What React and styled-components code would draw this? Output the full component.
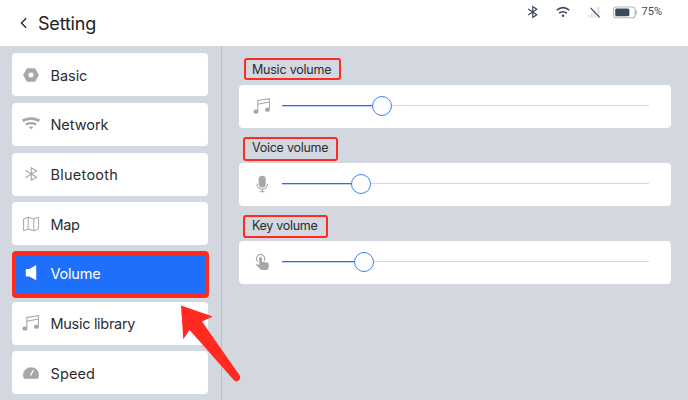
import React, { useState } from "react";
import styled, { createGlobalStyle } from "styled-components";

const theme = {
  background: "#d3d7e0",
  white: "#ffffff",
  text: "#2c2d30",
  icon: "#a7a7a7",
  status: "#3d4860",
  blue: "#1e70fa",
  red: "#ff2b20",
};

const menuItems = [
  { id: "basic", label: "Basic", icon: BasicIcon, spacing: -0.05 },
  { id: "network", label: "Network", icon: NetworkIcon, spacing: -0.05 },
  { id: "bluetooth", label: "Bluetooth", icon: BluetoothIcon, spacing: 0.25 },
  { id: "map", label: "Map", icon: MapIcon, spacing: -0.35 },
  { id: "volume", label: "Volume", icon: VolumeIcon, spacing: -0.2 },
  { id: "music", label: "Music library", icon: MusicIcon, spacing: -0.3 },
  { id: "speed", label: "Speed", icon: SpeedIcon, spacing: 0.1 },
];

const sliders = [
  { id: "music", label: "Music volume", icon: MusicIcon, value: 100, spacing: -0.22, frame: { x: 5, y: 0, w: 97, h: 22.5 } },
  { id: "voice", label: "Voice volume", icon: MicIcon, value: 79, spacing: -0.26, frame: { x: 4, y: 1, w: 95, h: 24 } },
  { id: "key", label: "Key volume", icon: TouchIcon, value: 82, spacing: -0.3, frame: { x: 4, y: 1, w: 85, h: 23 } },
];

export default function App() {
  const [selected, setSelected] = useState("volume");

  return (
    <Screen>
      <GlobalStyle />
      <Header>
        <BackIcon />
        <Title>Setting</Title>
        <StatusBar />
      </Header>
      <Body>
        <Sidebar>
          {menuItems.map(({ id, label, icon: Icon, spacing }) => (
            <MenuItem key={id} $active={id === selected} onClick={() => setSelected(id)}>
              <IconSlot>
                <Icon />
              </IconSlot>
              <MenuText $spacing={spacing}>{label}</MenuText>
            </MenuItem>
          ))}
        </Sidebar>
        <Content>
          {sliders.map(({ id, label, icon: Icon, value, spacing, frame }) => (
            <Section key={id}>
              <Label $spacing={spacing} $frame={frame}>
                <span>{label}</span>
              </Label>
              <SliderCard>
                <SliderIcon>
                  <Icon />
                </SliderIcon>
                <Track>
                  <Fill style={{ width: value }} />
                  <Knob />
                </Track>
              </SliderCard>
            </Section>
          ))}
        </Content>
      </Body>
      <Arrow viewBox="0 0 64 82">
        <path
          d="M3 4.5 L34.8 15.6 L24 20.4 L61.6 74.2 Q63 77.2 60.8 79.6 Q58.2 81.4 56 79.2 L11.6 29 L5.3 38.2 Z"
          fill={theme.red}
        />
      </Arrow>
    </Screen>
  );
}

function StatusBar() {
  return (
    <Status>
      <svg width="12" height="14" viewBox="0 0 12 14" fill="none" stroke={theme.status} strokeWidth="1.2">
        <path d="M1.2 4 L9.8 9.7 L5.8 12.3 V1.6 L9.8 4.2 L1.2 9.9" />
      </svg>
      <svg width="14" height="12" viewBox="0 0 14 12" fill="none" stroke={theme.status} strokeWidth="1.7">
        <path d="M0.8 4.2 Q7 -0.9 13.2 4.2 M3.2 7.2 Q7 4.3 10.8 7.2" />
        <circle cx="7" cy="9.8" r="1.2" fill={theme.status} stroke="none" />
      </svg>
      <svg width="14" height="14" viewBox="0 0 14 14">
        <path d="M1 10h1.6v2.5H1z M4 8h1.6v4.5H4z M7 5.5h1.6v7H7z M10.4 2h2v10.5h-2z" fill="#d9dde6" />
        <path d="M3.6 2.8 L12.6 12.4" stroke={theme.status} strokeWidth="1.2" />
      </svg>
      <Battery viewBox="0 0 24 13">
        <rect x="0.6" y="1" width="21.5" height="10.8" rx="2.8" fill="#fff" stroke="#b9b9b9" strokeWidth="1.1" />
        <path d="M23.2 4.6 V8.4" stroke="#b0b0b0" strokeWidth="1.2" />
        <rect x="2.2" y="2.5" width="14.2" height="7.8" rx="1.5" fill={theme.status} />
      </Battery>
      <Percent>75%</Percent>
    </Status>
  );
}

function BackIcon() {
  return (
    <svg width="8" height="12" viewBox="0 0 8 12" fill="none" stroke="#222" strokeWidth="1.3">
      <path d="M6.1 1.2 L1.4 6 L6.1 10.8" />
    </svg>
  );
}

function BasicIcon() {
  return (
    <svg width="18" height="18" viewBox="0 0 18 18">
      <path
        d="M5 2.4 H13 L16.6 9 L13 15.6 H5 L1.4 9 Z M9 6.2 A2.8 2.8 0 1 0 9 11.8 A2.8 2.8 0 1 0 9 6.2 Z"
        fill={theme.icon}
        fillRule="evenodd"
        stroke={theme.icon}
        strokeWidth="0.5"
        strokeLinejoin="round"
      />
    </svg>
  );
}

function NetworkIcon() {
  return (
    <svg width="18" height="18" viewBox="0 0 18 18" fill="none" stroke={theme.icon}>
      <path d="M0.6 5.7 Q9 1.5 17.4 5.7" strokeWidth="2.7" />
      <path d="M3.8 9.4 Q9 6.7 14.2 9.4" strokeWidth="2.3" />
      <path d="M6.6 12 Q9 11 11.4 12 L9 14.3 Z" fill={theme.icon} stroke="none" />
    </svg>
  );
}

function BluetoothIcon() {
  return (
    <svg width="18" height="18" viewBox="0 0 18 18" fill="none" stroke={theme.icon} strokeWidth="1.1">
      <path d="M3.4 5.2 L14.6 12.2 L9.3 15.3 V2.7 L14.6 5.8 L3.4 12.8" />
    </svg>
  );
}

function MapIcon() {
  return (
    <svg width="18" height="18" viewBox="0 0 18 18" fill="none" stroke={theme.icon} strokeWidth="1" strokeLinejoin="round">
      <path d="M1.6 4 L6.2 2.3 L11.8 3.8 L16.4 2.3 V14 L11.8 15.8 L6.2 14 L1.6 15.8 Z M6.2 2.3 V14 M11.8 3.8 V15.8" />
    </svg>
  );
}

function VolumeIcon() {
  return (
    <svg width="18" height="18" viewBox="0 0 18 18">
      <path d="M4.6 5 H7.4 L14.2 1 V16.2 L7.4 12.6 H4.6 Q3.8 12.6 3.8 11.8 V5.8 Q3.8 5 4.6 5 Z" fill="#fff" />
    </svg>
  );
}

function MusicIcon() {
  return (
    <svg width="18" height="18" viewBox="0 0 18 18" fill="none" stroke={theme.icon} strokeWidth="1.1">
      <path d="M4.8 14.6 V3.4 L16.4 1.6 V12.8 M4.8 7.2 L16.4 5" />
      <rect x="0.5" y="12.6" width="4.8" height="4" rx="1.7" fill={theme.icon} stroke="none" />
      <rect x="12" y="10.8" width="4.9" height="4" rx="1.7" fill={theme.icon} stroke="none" />
    </svg>
  );
}

function SpeedIcon() {
  return (
    <svg width="18" height="18" viewBox="0 0 18 18">
      <path d="M2.2 14.7 Q1 13.4 1 11 A8 7.8 0 0 1 17 11 Q17 13.4 15.8 14.7 Z" fill={theme.icon} />
      <path d="M8.7 11.1 L11.3 6.4" stroke="#fff" strokeWidth="1.2" strokeLinecap="round" />
    </svg>
  );
}

function MicIcon() {
  return (
    <svg width="18" height="18" viewBox="0 0 18 18" fill="none" stroke={theme.icon} strokeWidth="1.1">
      <rect x="5.6" y="0.8" width="7.2" height="11.6" rx="3.6" fill={theme.icon} stroke="none" />
      <path d="M3.9 8.8 C3.9 15.8 14.5 15.8 14.5 8.8 M9.2 14 V16.7 M6.9 16.8 H11.5" />
    </svg>
  );
}

function TouchIcon() {
  return (
    <svg width="18" height="18" viewBox="0 0 18 18">
      <path d="M4.7 8.6 A4.1 4.1 0 1 1 11 8" fill="none" stroke={theme.icon} strokeWidth="1.1" />
      <path
        d="M6.2 5.2 Q6.2 3.7 7.6 3.7 Q9 3.7 9 5.2 V8.8 L14.2 9.6 Q15.8 9.9 15.8 11.4 V14.4 Q15.5 17 13 17 H9.2 Q7.8 17 6.8 15.8 L3.2 11.9 Q3.4 10.8 4.7 11.2 L6.2 12 Z"
        fill={theme.icon}
      />
    </svg>
  );
}

const GlobalStyle = createGlobalStyle`
  *,
  *::after {
    box-sizing: border-box;
  }

  body {
    margin: 0;
    overflow: hidden;
    font-family: Inter, "Liberation Sans", sans-serif;
    color: ${theme.text};
  }

  svg {
    display: block;
    flex-shrink: 0;
  }
`;

const Screen = styled.div`
  position: relative;
  display: flex;
  flex-direction: column;
  width: 688px;
  height: 400px;
  overflow: hidden;
  background: ${theme.background};
`;

const Header = styled.header`
  display: flex;
  align-items: center;
  height: 46px;
  flex-shrink: 0;
  padding: 0 26px 0 20px;
  background: ${theme.white};
`;

const Title = styled.h1`
  margin: 1px 0 0 10px;
  font-size: 18px;
  font-weight: 400;
  line-height: 22px;
  letter-spacing: -0.2px;
  color: #222;
`;

const Status = styled.div`
  display: flex;
  align-items: center;
  gap: 17px;
  height: 24px;
  margin: 0 0 22px auto;
`;

const Battery = styled.svg`
  width: 24px;
  height: 13px;
  margin-left: -5px;
`;

const Percent = styled.span`
  margin-left: -12px;
  font-family: Roboto, sans-serif;
  font-size: 11px;
  line-height: 14px;
  color: ${theme.status};
`;

const Body = styled.div`
  display: flex;
  flex: 1;
  min-height: 0;
`;

const Sidebar = styled.nav`
  display: flex;
  flex-direction: column;
  gap: 6.7px;
  width: 222px;
  flex-shrink: 0;
  padding: 7.2px 13.5px 0 11.5px;
  border-right: 1px solid #b9bec8;
`;

const MenuItem = styled.div`
  position: relative;
  display: flex;
  align-items: center;
  height: 43px;
  flex-shrink: 0;
  padding-left: 10.5px;
  border-radius: 4px;
  background: ${({ $active }) => ($active ? theme.blue : theme.white)};
  color: ${({ $active }) => ($active ? theme.white : theme.text)};
  cursor: pointer;

  &::after {
    content: "";
    display: ${({ $active }) => ($active ? "block" : "none")};
    position: absolute;
    inset: -1px -1.5px -3px 0;
    border: 4px solid ${theme.red};
    border-radius: 4px;
  }
`;

const IconSlot = styled.span`
  width: 18px;
  margin-right: 10.5px;
`;

const MenuText = styled.span`
  padding-top: 2px;
  font-size: 14.5px;
  line-height: 20px;
  letter-spacing: ${({ $spacing }) => $spacing}px;
  white-space: nowrap;
`;

const Content = styled.main`
  flex: 1;
  padding: 11.7px 17.5px 0 17px;
`;

const Section = styled.section`
  height: 78px;
`;

const Label = styled.div`
  position: relative;
  height: 27px;
  padding: 2px 0 0 13px;
  font-size: 12.5px;
  line-height: 19px;
  letter-spacing: ${({ $spacing }) => $spacing}px;

  &::after {
    content: "";
    position: absolute;
    left: ${({ $frame }) => $frame.x}px;
    top: ${({ $frame }) => $frame.y}px;
    width: ${({ $frame }) => $frame.w}px;
    height: ${({ $frame }) => $frame.h}px;
    border: 2px solid ${theme.red};
    border-radius: 3px;
  }
`;

const SliderCard = styled.div`
  display: flex;
  align-items: center;
  height: 43px;
  padding: 0 21.5px 0 14px;
  border-radius: 4px;
  background: ${theme.white};
`;

const SliderIcon = styled.span`
  width: 18px;
  margin-right: 11px;
`;

const Track = styled.div`
  display: flex;
  align-items: center;
  flex: 1;
  height: 20px;
  margin-bottom: 1px;
  background: linear-gradient(#d8d8d8, #d8d8d8) center / 100% 1px no-repeat;
`;

const Fill = styled.div`
  height: 1px;
  background: ${theme.blue};
  box-shadow: 0 1px 0 rgba(30, 112, 250, 0.3);
`;

const Knob = styled.div`
  width: 20px;
  height: 20px;
  margin-left: -10px;
  border: 1.3px solid #3b82f6;
  border-radius: 50%;
  background: ${theme.white};
`;

/* pointer drawn over the menu */
const Arrow = styled.svg`
  position: absolute;
  left: 178px;
  top: 301px;
  width: 64px;
  height: 82px;
`;
